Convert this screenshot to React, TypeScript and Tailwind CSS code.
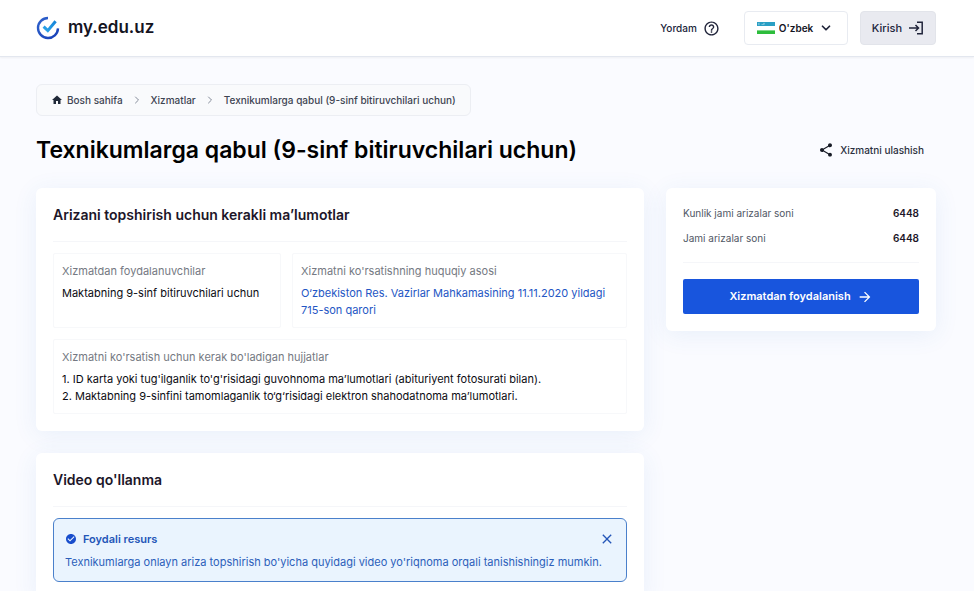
import React from 'react';
import { MdHome, MdShare, MdCheckCircle, MdHelpOutline, MdClose, MdArrowForward } from 'react-icons/md';
import { ChevronRight, ChevronDown } from 'lucide-react';

const breadcrumbs = ['Bosh sahifa', 'Xizmatlar', 'Texnikumlarga qabul (9-sinf bitiruvchilari uchun)'];

const stats = [
  { label: 'Kunlik jami arizalar soni', value: 6448 },
  { label: 'Jami arizalar soni', value: 6448 },
];

const Logo: React.FC = () => (
  <svg viewBox="0 0 24 24" className="size-6" fill="none" aria-hidden="true">
    <defs>
      <linearGradient id="ring" x1="0" y1="0" x2="1" y2="1">
        <stop offset="0" stopColor="#2f62cc" />
        <stop offset="1" stopColor="#1740b8" />
      </linearGradient>
      <linearGradient id="tick" x1="0" y1="1" x2="1" y2="0">
        <stop offset="0" stopColor="#2aa6ea" />
        <stop offset="1" stopColor="#1583d8" />
      </linearGradient>
    </defs>
    <path d="M12 2A10 10 0 1 0 22 12.4" stroke="url(#ring)" strokeWidth="2.4" />
    <path d="M7.6 10.6l4.2 4 7.8-9.4" stroke="url(#tick)" strokeWidth="3" />
  </svg>
);

const Flag: React.FC = () => (
  <svg viewBox="0 0 18 12" className="h-3 w-[18px]" aria-hidden="true">
    <rect width="18" height="12" fill="#fff" />
    <rect width="18" height="4" fill="#2a9fc4" />
    <rect y="8.4" width="18" height="3.6" fill="#2dbd3c" />
    <path d="M2.6 1.3a.8.8 0 1 0 0 1.4M4.5 2.5h3M6 1.4h2" stroke="#fff" strokeOpacity=".7" strokeWidth=".5" fill="none" />
  </svg>
);

const LoginIcon: React.FC = () => (
  <svg viewBox="0 0 16 16" className="size-4" fill="none" stroke="currentColor" strokeWidth="1.5" aria-hidden="true">
    <path d="M1 8h9.5M7.5 5l3 3-3 3M9 2.2h5.2v11.6H9" />
  </svg>
);

const Header: React.FC = () => (
  <header className="flex h-[57px] items-center justify-between border-b border-[#e3e7ef] bg-white pr-[38px] pl-9 shadow-xs">
    <a href="#" className="flex items-center gap-2 text-[17px] font-semibold text-[#14141f]">
      <Logo />
      my.edu.uz
    </a>
    <div className="flex items-center text-[10px] font-medium text-[#20243a]">
      <a href="#" className="mr-6 flex items-center gap-1.5">
        Yordam
        <MdHelpOutline className="size-[17px]" />
      </a>
      <label className="relative mr-3 flex h-[34px] w-[104px] items-center rounded-sm border border-[#e8ebf1] pl-3">
        <Flag />
        <select aria-label="Til" className="absolute inset-0 appearance-none bg-transparent pl-[34px] text-[10px] font-semibold text-[#14141f]">
          <option>O'zbek</option>
          <option>Русский</option>
        </select>
        <ChevronDown className="pointer-events-none absolute right-3.5 size-3.5" strokeWidth={3} />
      </label>
      <button type="button" className="flex h-[34px] items-center gap-1.5 rounded-sm border border-[#e2e4ea] bg-[#e9eaf0] px-[11px] text-[11px]">
        Kirish
        <LoginIcon />
      </button>
    </div>
  </header>
);

const Breadcrumbs: React.FC = () => (
  <nav className="flex h-8 w-fit items-center gap-2 rounded-md border border-[#eceef3] bg-[#f9fafc] px-3.5 text-[10px] font-medium text-[#3d4452]">
    {breadcrumbs.map((item, index) => (
      <React.Fragment key={item}>
        {index > 0 && <ChevronRight className="size-3 text-[#858c9a]" />}
        <a href="#" className="flex items-center gap-1">
          {index === 0 && <MdHome className="size-3 text-[#202938]" />}
          {item}
        </a>
      </React.Fragment>
    ))}
  </nav>
);

const Card: React.FC<{ title: string; children: React.ReactNode }> = ({ title, children }) => (
  <section className="rounded-md bg-white p-[17px] shadow-[0_4px_24px_rgba(60,120,200,0.09)]">
    <h2 className="border-b border-[#f5f6f9] pb-4 text-[14px] leading-5 font-semibold text-[#1d1629]">{title}</h2>
    <div className="mt-[11px]">{children}</div>
  </section>
);

const InfoBox: React.FC<{ label: string; className?: string; children: React.ReactNode }> = ({ label, className = '', children }) => (
  <div className={`min-h-[75px] rounded-xs border border-[#f7f8fa] px-2 pt-2 ${className}`}>
    <h3 className="text-[11px] leading-[18px] text-[#757982]">{label}</h3>
    <div className="mt-[5px] text-[11px] leading-[17px] text-[#0b0b12]">{children}</div>
  </div>
);

const Alert: React.FC = () => (
  <div className="rounded-md border border-[#4a80cb] bg-[#eaf4fe] px-[11px] pt-2.5 pb-[9px] text-[11px] text-[#2c5fba]">
    <div className="flex h-5 items-center justify-between">
      <strong className="flex items-center gap-1.5 font-semibold text-[#2456b8]">
        <MdCheckCircle className="size-3 text-[#184dcc]" />
        Foydali resurs
      </strong>
      <button type="button" aria-label="Yopish">
        <MdClose className="size-4 text-[#2456b8]" />
      </button>
    </div>
    <p className="mt-[3px] leading-5">
      Texnikumlarga onlayn ariza topshirish bo'yicha quyidagi video yo'riqnoma orqali tanishishingiz mumkin.
    </p>
  </div>
);

const Sidebar: React.FC = () => (
  <aside className="w-[270px] shrink-0 rounded-md bg-white p-[17px] shadow-[0_4px_24px_rgba(60,120,200,0.09)]">
    <dl className="flex flex-col gap-[9px] border-b border-[#f5f6f9] pb-4 text-[10px] leading-4">
      {stats.map(stat => (
        <div key={stat.label} className="flex justify-between">
          <dt className="text-[#505765]">{stat.label}</dt>
          <dd className="font-semibold text-[#1d1629]">{stat.value}</dd>
        </div>
      ))}
    </dl>
    <button type="button" className="mt-4 flex h-[35px] w-full items-center justify-center gap-1.5 rounded-xs bg-[#1855dd] text-[11px] font-semibold text-white">
      Xizmatdan foydalanish
      <MdArrowForward className="size-4" />
    </button>
  </aside>
);

const App: React.FC = () => {
  return (
    <div className="min-h-screen bg-[#fafbff] font-['Inter',sans-serif]">
      <Header />
      <main className="pt-[27px] pr-[38px] pl-9">
        <Breadcrumbs />
        <div className="mt-[18px] flex items-center justify-between pr-3">
          <h1 className="text-[23px] leading-8 font-semibold text-black">Texnikumlarga qabul (9-sinf bitiruvchilari uchun)</h1>
          <button type="button" className="flex items-center gap-1.5 text-[10px] font-medium text-[#2a3040]">
            <MdShare className="size-4 text-[#171b26]" />
            Xizmatni ulashish
          </button>
        </div>
        <div className="mt-[22px] flex items-start gap-[22px]">
          <div className="flex min-w-0 flex-1 flex-col gap-[22px]">
            <Card title="Arizani topshirish uchun kerakli ma’lumotlar">
              <div className="flex flex-wrap gap-[11px]">
                <InfoBox label="Xizmatdan foydalanuvchilar" className="w-[228px]">
                  Maktabning 9-sinf bitiruvchilari uchun
                </InfoBox>
                <InfoBox label="Xizmatni ko'rsatishning huquqiy asosi" className="flex-1">
                  <a href="#" className="text-[#2456c4]">
                    O‘zbekiston Res. Vazirlar Mahkamasining 11.11.2020 yildagi 715-son qarori
                  </a>
                </InfoBox>
                <InfoBox label="Xizmatni ko'rsatish uchun kerak bo'ladigan hujjatlar" className="w-full">
                  <ol>
                    <li>1. ID karta yoki tug'ilganlik to'g'risidagi guvohnoma ma’lumotlari (abituriyent fotosurati bilan).</li>
                    <li>2. Maktabning 9-sinfini tamomlaganlik to‘g‘risidagi elektron shahodatnoma ma’lumotlari.</li>
                  </ol>
                </InfoBox>
              </div>
            </Card>
            <Card title="Video qo'llanma">
              <Alert />
            </Card>
          </div>
          <Sidebar />
        </div>
      </main>
    </div>
  );
};

export default App;
